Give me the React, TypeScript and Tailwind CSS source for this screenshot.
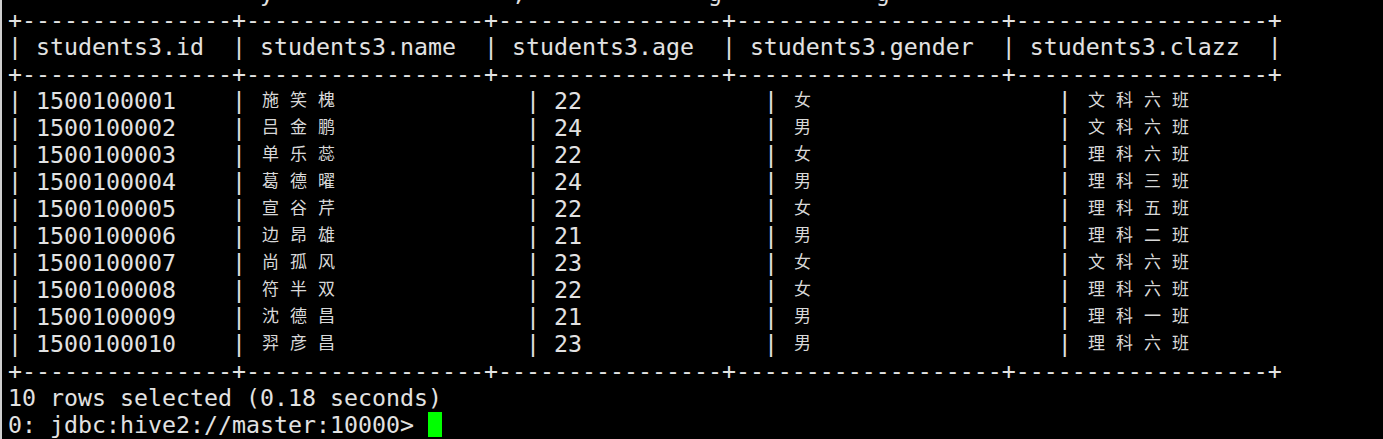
import React from "react";

type Row = [string, string, string, string, string];

const rows: Row[] = [
  ["1500100001", "施笑槐", "22", "女", "文科六班"],
  ["1500100002", "吕金鹏", "24", "男", "文科六班"],
  ["1500100003", "单乐蕊", "22", "女", "理科六班"],
  ["1500100004", "葛德曜", "24", "男", "理科三班"],
  ["1500100005", "宣谷芹", "22", "女", "理科五班"],
  ["1500100006", "边昂雄", "21", "男", "理科二班"],
  ["1500100007", "尚孤风", "23", "女", "文科六班"],
  ["1500100008", "符半双", "22", "女", "理科六班"],
  ["1500100009", "沈德昌", "21", "男", "理科一班"],
  ["1500100010", "羿彦昌", "23", "男", "理科六班"],
];

const widths = [12, 14, 13, 16, 15];
const headers = [
  "students3.id",
  "students3.name",
  "students3.age",
  "students3.gender",
  "students3.clazz",
];

const pad = (s: string, w: number) => s + " ".repeat(Math.max(0, w - s.length));

const border =
  "+" + widths.map((w) => "-".repeat(w + 3)).join("+") + "+";

const makeRow = (cells: string[]) =>
  "| " + cells.map((c, i) => pad(c, widths[i])).join("  | ") + "  |";

// data rows: CJK cells take two columns, so the closing pipe falls past the window edge
const makeDataRow = (cells: string[]) =>
  "| " + cells.map((c, i) => pad(c, widths[i])).join("  | ").trimEnd();

const isCJK = (ch: string) => /[\u3000-\u9fff\uff00-\uffef]/.test(ch);

function Line({ text, children }: { text: string; children?: React.ReactNode }) {
  const parts: React.ReactNode[] = [];
  let buf = "";
  let key = 0;
  for (const ch of text) {
    if (isCJK(ch)) {
      if (buf) {
        parts.push(<span key={key++}>{buf}</span>);
        buf = "";
      }
      parts.push(
        <span
          key={key++}
          className="inline-block w-[28px] pl-[2px] relative top-[-3px] font-['Noto_Sans_CJK_SC','Noto_Sans_CJK_TC',sans-serif] text-[17px] leading-[27px] text-[#d8d8d8]"
        >
          {ch}
        </span>
      );
    } else {
      buf += ch;
    }
  }
  if (buf) parts.push(<span key={key++}>{buf}</span>);
  return (
    <div className="h-[27px] leading-[27px] whitespace-pre">
      {parts}
      {children}
    </div>
  );
}

const topLine = (() => {
  const arr = Array(70).fill(" ");
  arr[18] = "y";
  arr[36] = ",";
  arr[50] = "g";
  arr[62] = "g";
  return arr.join("").trimEnd();
})();

export default function App() {
  return (
    <div className="w-[1383px] h-[439px] overflow-hidden bg-black flex">
      <div className="w-[2px] h-full bg-[#cfcfcf] shrink-0" />
      <div className="flex-1 overflow-hidden pl-[6px] mt-[-21px] font-['DejaVu_Sans_Mono','Liberation_Mono',monospace] text-[23.25px] text-[#e2e2e2]">
        <Line text={topLine} />
        <Line text={border} />
        <Line text={makeRow(headers)} />
        <Line text={border} />
        {rows.map((r) => (
          <Line key={r[0]} text={makeDataRow(r)} />
        ))}
        <Line text={border} />
        <Line text="10 rows selected (0.18 seconds)" />
        <Line text="0: jdbc:hive2://master:10000> ">
          <span className="inline-block w-[14px] h-[25px] bg-[#00ff00] align-top mt-[1px]" />
        </Line>
      </div>
    </div>
  );
}
